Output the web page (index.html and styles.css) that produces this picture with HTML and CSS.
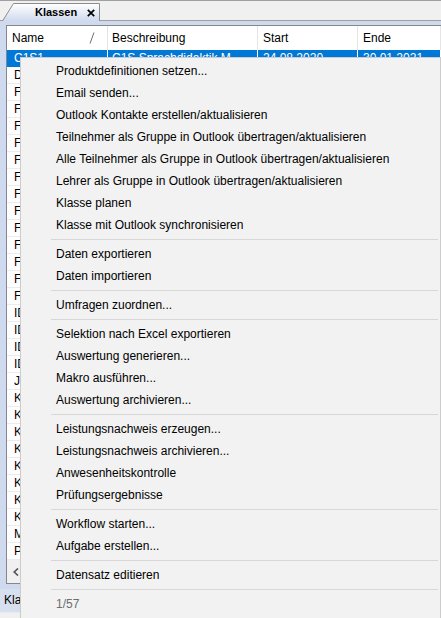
FILE: index.html
```html
<!DOCTYPE html>
<html lang="de">
<head>
<meta charset="utf-8">
<title>Klassen</title>
<link rel="stylesheet" href="styles.css">
</head>
<body>
<div class="app">
  <div class="tabstrip">
    <div class="tab">
      <svg class="tab-shape" width="98" height="18" viewBox="0 0 98 18">
        <defs>
          <linearGradient id="tg" x1="0" y1="0" x2="0" y2="1">
            <stop offset="0" stop-color="#ffffff"/>
            <stop offset="1" stop-color="#cfdaee"/>
          </linearGradient>
        </defs>
        <path d="M0.5 18 L11.5 0.5 L97.5 0.5 L97.5 18 Z" fill="url(#tg)" stroke="none"/>
        <path d="M0.5 18 L11.5 0.5 L97.5 0.5 L97.5 18" fill="none" stroke="#8c8c8c" stroke-width="1"/>
      </svg>
      <span class="tab-title">Klassen</span>
      <svg class="tab-close" width="8" height="8" viewBox="0 0 8 8"><path d="M0.8 0.8 L7.2 7.2 M7.2 0.8 L0.8 7.2" stroke="#000" stroke-width="1.7"/></svg>
    </div>
  </div>
  <div class="content">
    <div class="gridframe">
      <div class="hdr">
        <div class="cell c1">Name<svg class="sort" width="6" height="12" viewBox="0 0 6 12"><path d="M1 11.5 L5 0.5" stroke="#6e6e6e" stroke-width="1"/></svg></div>
        <div class="cell c2">Beschreibung</div>
        <div class="cell c3">Start</div>
        <div class="cell c4">Ende</div>
      </div>
      <div class="rows">
        <div class="row sel"><div class="cell c1">C1S1</div><div class="cell c2">C1S Sprachdidaktik M</div><div class="cell c3">24.08.2020</div><div class="cell c4">30.01.2021</div></div>
        <div class="row"><div class="cell c1">D</div><div class="cell c2"></div><div class="cell c3"></div><div class="cell c4"></div></div>
        <div class="row"><div class="cell c1">F</div><div class="cell c2"></div><div class="cell c3"></div><div class="cell c4"></div></div>
        <div class="row"><div class="cell c1">F</div><div class="cell c2"></div><div class="cell c3"></div><div class="cell c4"></div></div>
        <div class="row"><div class="cell c1">F</div><div class="cell c2"></div><div class="cell c3"></div><div class="cell c4"></div></div>
        <div class="row"><div class="cell c1">F</div><div class="cell c2"></div><div class="cell c3"></div><div class="cell c4"></div></div>
        <div class="row"><div class="cell c1">F</div><div class="cell c2"></div><div class="cell c3"></div><div class="cell c4"></div></div>
        <div class="row"><div class="cell c1">F</div><div class="cell c2"></div><div class="cell c3"></div><div class="cell c4"></div></div>
        <div class="row"><div class="cell c1">F</div><div class="cell c2"></div><div class="cell c3"></div><div class="cell c4"></div></div>
        <div class="row"><div class="cell c1">F</div><div class="cell c2"></div><div class="cell c3"></div><div class="cell c4"></div></div>
        <div class="row"><div class="cell c1">F</div><div class="cell c2"></div><div class="cell c3"></div><div class="cell c4"></div></div>
        <div class="row"><div class="cell c1">F</div><div class="cell c2"></div><div class="cell c3"></div><div class="cell c4"></div></div>
        <div class="row"><div class="cell c1">F</div><div class="cell c2"></div><div class="cell c3"></div><div class="cell c4"></div></div>
        <div class="row"><div class="cell c1">F</div><div class="cell c2"></div><div class="cell c3"></div><div class="cell c4"></div></div>
        <div class="row"><div class="cell c1">F</div><div class="cell c2"></div><div class="cell c3"></div><div class="cell c4"></div></div>
        <div class="row"><div class="cell c1">ID</div><div class="cell c2"></div><div class="cell c3"></div><div class="cell c4"></div></div>
        <div class="row"><div class="cell c1">ID</div><div class="cell c2"></div><div class="cell c3"></div><div class="cell c4"></div></div>
        <div class="row"><div class="cell c1">ID</div><div class="cell c2"></div><div class="cell c3"></div><div class="cell c4"></div></div>
        <div class="row"><div class="cell c1">ID</div><div class="cell c2"></div><div class="cell c3"></div><div class="cell c4"></div></div>
        <div class="row"><div class="cell c1">JR</div><div class="cell c2"></div><div class="cell c3"></div><div class="cell c4"></div></div>
        <div class="row"><div class="cell c1">K</div><div class="cell c2"></div><div class="cell c3"></div><div class="cell c4"></div></div>
        <div class="row"><div class="cell c1">K</div><div class="cell c2"></div><div class="cell c3"></div><div class="cell c4"></div></div>
        <div class="row"><div class="cell c1">K</div><div class="cell c2"></div><div class="cell c3"></div><div class="cell c4"></div></div>
        <div class="row"><div class="cell c1">K</div><div class="cell c2"></div><div class="cell c3"></div><div class="cell c4"></div></div>
        <div class="row"><div class="cell c1">K</div><div class="cell c2"></div><div class="cell c3"></div><div class="cell c4"></div></div>
        <div class="row"><div class="cell c1">K</div><div class="cell c2"></div><div class="cell c3"></div><div class="cell c4"></div></div>
        <div class="row"><div class="cell c1">K</div><div class="cell c2"></div><div class="cell c3"></div><div class="cell c4"></div></div>
        <div class="row"><div class="cell c1">K</div><div class="cell c2"></div><div class="cell c3"></div><div class="cell c4"></div></div>
        <div class="row"><div class="cell c1">M</div><div class="cell c2"></div><div class="cell c3"></div><div class="cell c4"></div></div>
        <div class="row"><div class="cell c1">P</div><div class="cell c2"></div><div class="cell c3"></div><div class="cell c4"></div></div>
      </div>
      <div class="hscroll">
        <svg class="arrow" width="6" height="8" viewBox="0 0 6 8"><path d="M5 0.5 L1.2 4 L5 7.5" fill="none" stroke="#505050" stroke-width="1.6"/></svg>
      </div>
    </div>
  </div>
  <div class="bottombar"><span class="bottom-tab">Kla</span></div>
  <div class="bottomrest"></div>
</div>

<div class="menu">
  <div class="item">Produktdefinitionen setzen...</div>
  <div class="item">Email senden...</div>
  <div class="item">Outlook Kontakte erstellen/aktualisieren</div>
  <div class="item">Teilnehmer als Gruppe in Outlook übertragen/aktualisieren</div>
  <div class="item">Alle Teilnehmer als Gruppe in Outlook übertragen/aktualisieren</div>
  <div class="item">Lehrer als Gruppe in Outlook übertragen/aktualisieren</div>
  <div class="item">Klasse planen</div>
  <div class="item">Klasse mit Outlook synchronisieren</div>
  <div class="sep"></div>
  <div class="item">Daten exportieren</div>
  <div class="item">Daten importieren</div>
  <div class="sep"></div>
  <div class="item">Umfragen zuordnen...</div>
  <div class="sep"></div>
  <div class="item">Selektion nach Excel exportieren</div>
  <div class="item">Auswertung generieren...</div>
  <div class="item">Makro ausführen...</div>
  <div class="item">Auswertung archivieren...</div>
  <div class="sep"></div>
  <div class="item">Leistungsnachweis erzeugen...</div>
  <div class="item">Leistungsnachweis archivieren...</div>
  <div class="item">Anwesenheitskontrolle</div>
  <div class="item">Prüfungsergebnisse</div>
  <div class="sep"></div>
  <div class="item">Workflow starten...</div>
  <div class="item">Aufgabe erstellen...</div>
  <div class="sep"></div>
  <div class="item">Datensatz editieren</div>
  <div class="sep"></div>
  <div class="item disabled">1/57</div>
</div>
</body>
</html>
```

FILE: styles.css
```css
* { box-sizing: border-box; }

html, body {
  margin: 0;
  padding: 0;
}

body {
  width: 441px;
  height: 618px;
  overflow: hidden;
  position: relative;
  background: #f0f0f0;
  font-family: "Liberation Sans", Arial, sans-serif;
  font-size: 12px;
  color: #000;
}

.app {
  display: flex;
  flex-direction: column;
  height: 618px;
}

/* ---------- tab strip ---------- */
.tabstrip {
  height: 20px;
  border-top: 1px solid #a0a0a0;
  background: #f0f0f0;
  display: flex;
  align-items: flex-end;
  padding-left: 2px;
  position: relative;
  z-index: 2;
}

.tab {
  position: relative;
  width: 98px;
  height: 18px;
  margin-bottom: -1px;
  display: flex;
  align-items: center;
  padding-left: 33px;
}

.tab-shape {
  position: absolute;
  left: 0;
  top: 0;
}

.tab-title {
  position: relative;
  font-weight: bold;
  font-size: 11px;
  line-height: 16px;
}

.tab-close {
  position: relative;
  margin-left: 10px;
  margin-top: 1px;
}

/* ---------- content frame ---------- */
.content {
  background: #cfdaee;
  border-top: 1px solid #a0a0a0;
  padding: 4px 0 5px 6px;
}

.gridframe {
  border: 1px solid #828790;
  border-right: none;
  border-bottom: none;
  background: #fff;
  display: flex;
  flex-direction: column;
}

.hdr {
  height: 24px;
  display: grid;
  grid-template-columns: 101px 150px 100px 1fr;
  background: #fff;
}

.hdr .cell {
  display: flex;
  align-items: center;
  justify-content: space-between;
  padding-left: 5px;
  border-right: 1px solid #e5e5e5;
  line-height: 24px;
}

.hdr .c2 { padding-left: 4px; }

.sort {
  margin-right: 12px;
}

.rows {
  display: flex;
  flex-direction: column;
}

.row {
  height: 17px;
  display: grid;
  grid-template-columns: 101px 150px 100px 1fr;
  border-bottom: 1px solid #ececec;
}

.row .cell {
  padding-left: 7px;
  line-height: 16px;
  white-space: nowrap;
  overflow: hidden;
  border-right: 1px solid #f0f0f0;
}

.row .c2 { padding-left: 4px; }
.row .c3, .row .c4 { padding-left: 5px; }

.row.sel {
  background: #0078d7;
  color: #fff;
  border-bottom-color: #0078d7;
}

.row.sel .cell {
  border-right-color: #ffffff;
}

.hscroll {
  height: 24px;
  background: #f0f0f0;
  display: flex;
  align-items: center;
  padding-left: 6px;
  border-bottom: 1px solid #828790;
}

/* ---------- bottom bar ---------- */
.bottombar {
  height: 23px;
  background: #d6e0ee;
  display: flex;
  align-items: center;
  padding-left: 4px;
}

.bottom-tab {
  font-size: 12px;
  line-height: 19px;
}

.bottomrest {
  flex: 1;
  background: #f0f0f0;
  border-top: 1px solid #e8ecf2;
}

/* ---------- context menu ---------- */
.menu {
  position: absolute;
  left: 20px;
  top: 57px;
  width: 421px;
  height: 570px;
  background: #f2f2f2;
  border: 1px solid #cccccc;
  padding: 2px;
  box-shadow: 2px 2px 3px rgba(0, 0, 0, 0.18);
  display: flex;
  flex-direction: column;
  z-index: 10;
}

.item {
  height: 22px;
  line-height: 22px;
  padding-left: 33px;
  white-space: nowrap;
  color: #000;
}

.item.disabled {
  color: #6d6d6d;
}

.sep {
  height: 1px;
  margin: 3px 0 3px 28px;
  background: #d7d7d7;
}
```
